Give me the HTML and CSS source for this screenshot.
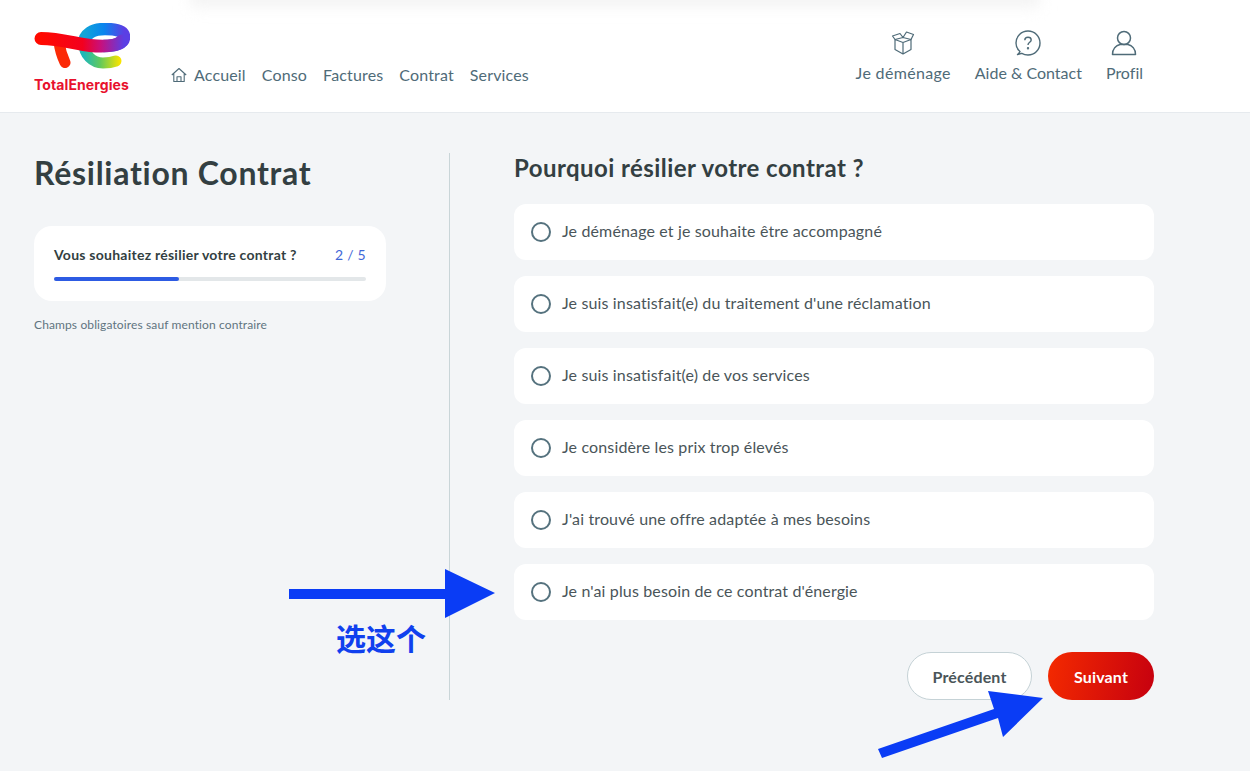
FILE: index.html
```html
<!DOCTYPE html>
<html lang="fr">
<head>
  <meta charset="UTF-8" />
  <meta name="viewport" content="width=device-width, initial-scale=1.0"/>
  <title>Résiliation Contrat | TotalEnergies</title>
  <link rel="stylesheet" href="styles.css">
</head>
<body>
  <header class="topbar">
    <div class="logo">
      <svg width="96" height="46" viewBox="34 23 96 46" fill="none" stroke-linecap="round">
        <defs>
          <linearGradient id="logoBar" gradientUnits="userSpaceOnUse" x1="41" y1="0" x2="124" y2="0">
            <stop offset="0" stop-color="#ff0a00"/>
            <stop offset=".5" stop-color="#f3001e"/>
            <stop offset=".72" stop-color="#c8107c"/>
            <stop offset="1" stop-color="#5b3fe4"/>
          </linearGradient>
          <linearGradient id="logoTop" gradientUnits="userSpaceOnUse" x1="84" y1="0" x2="124" y2="0">
            <stop offset="0" stop-color="#12a5d8"/>
            <stop offset=".5" stop-color="#0a84ee"/>
            <stop offset="1" stop-color="#5b3fe4"/>
          </linearGradient>
          <linearGradient id="logoLow" gradientUnits="userSpaceOnUse" x1="84" y1="0" x2="120" y2="0">
            <stop offset="0" stop-color="#1fb8b8"/>
            <stop offset=".45" stop-color="#62c95c"/>
            <stop offset="1" stop-color="#f7e400"/>
          </linearGradient>
        </defs>
        <path d="M84 44C84 54 92 63 103 63C108 63 112 62.500 116 61" stroke="url(#logoLow)" stroke-width="11"/>
        <path d="M84 44C84 34 93 29 105 29C117 29 124 31 124 37C124 43 116 46 104 46" stroke="url(#logoTop)" stroke-width="12.500"/>
        <path d="M59 42C60 50 62 56 65 62.500" stroke="#fb2a06" stroke-width="11"/>
        <path d="M41 38.500C60 38.500 76 44 90 45.500C100 46.500 116 47 122 41" stroke="url(#logoBar)" stroke-width="13"/>
      </svg>
      <span class="logo-name">TotalEnergies</span>
    </div>

    <nav class="main-nav">
      <a class="nav-link" href="#">
        <svg class="home-icon" width="16" height="16" viewBox="0 0 16 16" fill="none" stroke="#4f6b78" stroke-width="1.100" stroke-linejoin="round">
          <path d="M.8 8 8 1.500 15.200 8M2.800 6.500V14.500H13.200V6.500M6 14.500V9.800H10V14.500"/>
        </svg>
        Accueil
      </a>
      <a class="nav-link" href="#">Conso</a>
      <a class="nav-link" href="#">Factures</a>
      <a class="nav-link" href="#">Contrat</a>
      <a class="nav-link" href="#">Services</a>
    </nav>

    <nav class="side-nav">
      <a class="side-link side-link-wide" href="#">
        <svg width="24" height="26" viewBox="0 0 24 24" fill="none" stroke="#4f6b78" stroke-width="1.200" stroke-linejoin="round">
          <path d="M4 8.500 12 11.500 20 8.500V18.500L12 23 4 18.500ZM12 11.500V23"/>
          <path d="M4 8.500 1.500 5 9 2.500 12 6.500 20 8.500 22.500 3.500 15.500 1 12 6.500 4 8.500"/>
        </svg>
        <span>Je déménage</span>
      </a>
      <a class="side-link" href="#">
        <svg width="26" height="26" viewBox="0 0 26 26" fill="none" stroke="#4f6b78" stroke-width="1.400" stroke-linejoin="round">
          <path d="M5 21.500C2.500 19.500 1 16.500 1 13A12 12 0 1 1 13 25C10.500 25 8.500 24.300 6.800 23.300L2.500 24.500C3.800 23.500 4.700 22.500 5 21.500Z"/>
          <path d="M9.800 10.200C9.800 8.300 11.200 7.300 13 7.300C14.800 7.300 16.200 8.400 16.200 10C16.200 12.300 13 12.300 13 15"/>
          <circle cx="13" cy="18.300" r=".5"/>
        </svg>
        <span>Aide &amp; Contact</span>
      </a>
      <a class="side-link" href="#">
        <svg width="26" height="26" viewBox="0 0 26 26" fill="none" stroke="#4f6b78" stroke-width="1.500" stroke-linejoin="round">
          <circle cx="13" cy="8" r="6.500"/>
          <path d="M1.500 24.500C1.500 19 5 15.500 9 14.500H17C21 15.500 24.500 19 24.500 24.500Z"/>
        </svg>
        <span>Profil</span>
      </a>
    </nav>
  </header>

  <main class="page">
    <aside class="summary">
      <h1>Résiliation Contrat</h1>
      <div class="step-card">
        <div class="step-row">
          <strong>Vous souhaitez résilier votre contrat ?</strong>
          <span class="step-count">2 / 5</span>
        </div>
        <div class="progress"><div class="progress-fill" style="width: 40%"></div></div>
      </div>
      <p class="note">Champs obligatoires sauf mention contraire</p>
    </aside>

    <section class="reasons">
      <h2>Pourquoi résilier votre contrat ?</h2>
      <div class="options">
        <label class="option"><input type="radio" name="reason"><span>Je déménage et je souhaite être accompagné</span></label>
        <label class="option"><input type="radio" name="reason"><span>Je suis insatisfait(e) du traitement d'une réclamation</span></label>
        <label class="option"><input type="radio" name="reason"><span>Je suis insatisfait(e) de vos services</span></label>
        <label class="option"><input type="radio" name="reason"><span>Je considère les prix trop élevés</span></label>
        <label class="option"><input type="radio" name="reason"><span>J'ai trouvé une offre adaptée à mes besoins</span></label>
        <label class="option"><input type="radio" name="reason"><span>Je n'ai plus besoin de ce contrat d'énergie</span></label>
      </div>
      <div class="actions">
        <button class="btn btn-back">Précédent</button>
        <button class="btn btn-next">Suivant</button>
      </div>
    </section>
  </main>

  <!-- annotations drawn over the page -->
  <svg class="marks" width="1250" height="771" viewBox="0 0 1250 771">
    <path d="M289 589H445V569L495 593 445 618V599H289Z"/>
    <path d="M878 749 994 709 988 691 1043 698 1003 737 998 718 882 758Z"/>
  </svg>
  <div class="mark-label">选这个</div>
</body>
</html>
```

FILE: styles.css
```css
* {
  box-sizing: border-box;
}

html, body {
  height: 100%;
}

body {
  margin: 0;
  position: relative;
  overflow: hidden;
  background-color: #f3f5f7;
  color: #333f42;
  font-family: "Lato", "Noto Sans CJK SC", sans-serif;
  font-variant-ligatures: none;
}

a {
  color: #4f6b78;
  text-decoration: none;
}

/* header */
.topbar {
  position: relative;
  display: flex;
  height: 113px;
  padding: 23px 107px 0 34px;
  background-color: #fff;
  border-bottom: 1px solid #e6eaee;
}

.topbar::before {
  content: "";
  position: absolute;
  top: -14px;
  left: 190px;
  width: 850px;
  height: 20px;
  background-color: #f2f2f2;
  filter: blur(8px);
}

.logo {
  display: flex;
  flex-direction: column;
  width: 96px;
}

.logo svg {
  display: block;
}

.logo-name {
  margin-top: 6px;
  color: #e8112d;
  font-family: "Inter", sans-serif;
  font-size: 14px;
  font-weight: 700;
  line-height: 20px;
  letter-spacing: 0.1px;
  white-space: nowrap;
}

.main-nav {
  display: flex;
  align-items: center;
  gap: 16px;
  height: 22px;
  margin: 41px 0 0 40px;
}

.nav-link {
  display: flex;
  align-items: center;
  gap: 7px;
  font-size: 16px;
  line-height: 22px;
  letter-spacing: 0.15px;
}

.home-icon {
  margin-left: 1px;
}

.side-nav {
  display: flex;
  gap: 24px;
  margin-left: auto;
  padding-top: 7px;
}

.side-link {
  display: flex;
  flex-direction: column;
  align-items: center;
  font-size: 16px;
  line-height: 22px;
}

.side-link-wide {
  letter-spacing: 0.33px;
}

.side-link svg {
  height: 26px;
  margin-bottom: 6px;
}

/* page */
.page {
  display: flex;
  padding: 40px 0 0 34px;
}

.summary {
  width: 416px;
  padding-right: 63px;
  border-right: 1px solid #c9d5d8;
}

h1 {
  margin: 0 0 33px;
  font-size: 32px;
  font-weight: 700;
  line-height: 40px;
  letter-spacing: 0.72px;
}

.step-card {
  height: 75px;
  padding: 19px 20px 20px;
  background-color: #fff;
  border-radius: 18px;
}

.step-row {
  display: flex;
  justify-content: space-between;
  margin-bottom: 12px;
  font-size: 14px;
  line-height: 20px;
  letter-spacing: 0.25px;
}

.step-count {
  color: #3f68d8;
}

.progress {
  height: 4px;
  background-color: #e3e7e9;
  border-radius: 2px;
}

.progress-fill {
  height: 100%;
  background-color: #2d5be3;
  border-radius: 2px;
}

.note {
  margin: 16px 0 0;
  color: #5f7480;
  font-size: 12px;
  line-height: 16px;
  letter-spacing: 0.12px;
}

.reasons {
  width: 704px;
  padding-left: 64px;
}

h2 {
  margin: 0 0 21px;
  font-size: 24px;
  font-weight: 700;
  line-height: 30px;
  letter-spacing: 0.43px;
}

.options {
  display: flex;
  flex-direction: column;
  gap: 16px;
}

.option {
  display: flex;
  align-items: center;
  gap: 11px;
  height: 56px;
  padding: 0 0 4px 17px;
  background-color: #fff;
  border-radius: 12px;
  color: #4a5559;
  font-size: 16px;
  letter-spacing: 0.14px;
}

.option input {
  appearance: none;
  position: relative;
  top: 2px;
  width: 20px;
  height: 20px;
  margin: 0;
  background-color: #fff;
  border: 2px solid #55727e;
  border-radius: 50%;
}

.actions {
  display: flex;
  justify-content: flex-end;
  gap: 16px;
  margin-top: 32px;
}

.btn {
  height: 48px;
  border-radius: 24px;
  font-family: inherit;
  font-size: 16px;
  font-weight: 700;
  letter-spacing: 0.15px;
}

.btn-back {
  width: 125px;
  background-color: #fff;
  border: 1px solid #c5d2d6;
  color: #4a5559;
}

.btn-next {
  width: 106px;
  background: linear-gradient(100deg, #f42a00, #c6000f);
  border: none;
  color: #fff;
}

/* annotations */
.marks {
  position: absolute;
  top: 0;
  left: 0;
  fill: #0a3cf5;
}

.mark-label {
  position: absolute;
  top: 619px;
  left: 336px;
  color: #1040ee;
  font-family: "Noto Sans CJK SC", sans-serif;
  font-size: 30px;
  font-weight: 700;
  line-height: 36px;
  white-space: nowrap;
}
```
